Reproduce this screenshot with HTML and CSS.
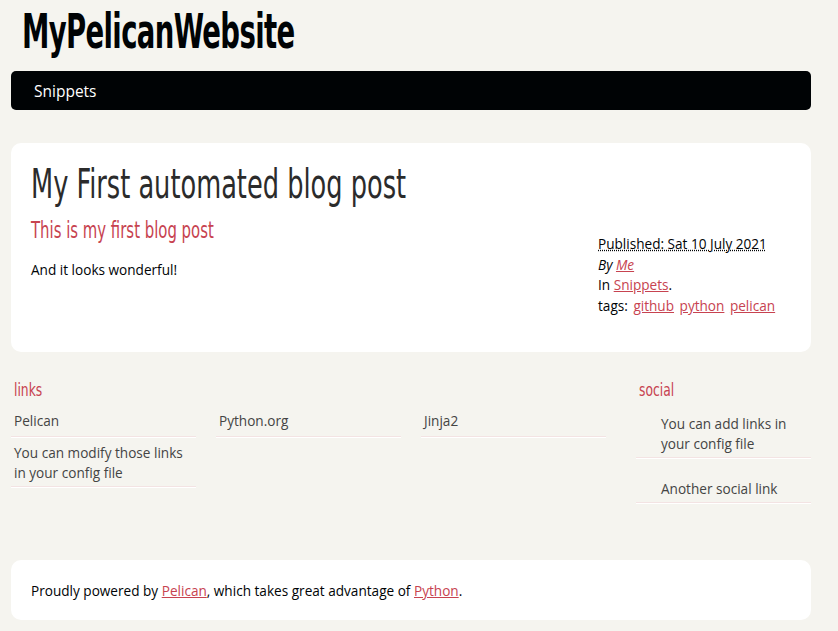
FILE: index.html
```html
<!DOCTYPE html>
<html lang="en">
<head>
<meta charset="utf-8">
<title>MyPelicanWebsite</title>
<link rel="stylesheet" href="styles.css">
</head>
<body>
<header class="banner">
  <h1 class="site-title"><a class="narrow title-narrow" href="#">MyPelicanWebsite</a></h1>
  <nav class="menu"><ul><li><a href="#">Snippets</a></li></ul></nav>
</header>

<section class="box content">
  <article class="post">
    <h1 class="entry-title"><span class="narrow entry-narrow">My First automated blog post</span></h1>
    <div class="post-body">
      <div class="entry-content">
        <h2 class="subtitle"><span class="narrow sub-narrow">This is my first blog post</span></h2>
        <p>And it looks wonderful!</p>
      </div>
      <footer class="post-info">
        <abbr class="published" title="2021-07-10">Published: Sat 10 July 2021</abbr>
        <address class="author">By <a href="#">Me</a></address>
        <div>In <a href="#">Snippets</a>.</div>
        <div class="tags">tags: <a href="#">github</a> <a href="#">python</a> <a href="#">pelican</a></div>
      </footer>
    </div>
  </article>
</section>

<section class="extras">
  <div class="blogroll">
    <h2 class="extras-title"><span class="narrow extras-narrow">links</span></h2>
    <ul class="blogroll-list">
      <li>Pelican</li>
      <li>Python.org</li>
      <li>Jinja2</li>
      <li>You can modify those links in your config file</li>
    </ul>
  </div>
  <div class="social">
    <h2 class="extras-title"><span class="narrow extras-narrow">social</span></h2>
    <ul class="social-list">
      <li>You can add links in your config file</li>
      <li>Another social link</li>
    </ul>
  </div>
</section>

<footer class="box site-footer">
  <address>Proudly powered by <a href="#">Pelican</a>, which takes great advantage of <a href="#">Python</a>.</address>
</footer>
</body>
</html>
```

FILE: styles.css
```css
* { box-sizing: border-box; }
html { background: #f5f4ef; }
body {
  margin: 0 0 0 11px;
  width: 800px;
  padding-bottom: 11px;
  font-family: "Open Sans", "DejaVu Sans", sans-serif;
  font-size: 13.6px;
  color: #000305;
  background: #f5f4ef;
}
a { color: #c74350; }
ul { list-style: none; margin: 0; padding: 0; }
address { font-style: normal; }

.narrow {
  display: inline-block;
  transform-origin: 0 50%;
  white-space: nowrap;
}

.banner { padding-top: 2px; }
.site-title {
  margin: 0 0 0 11px;
  font-family: "DejaVu Sans Condensed", "DejaVu Sans", sans-serif;
  font-stretch: condensed;
  font-size: 48px;
  line-height: 58px;
  font-weight: bold;
  letter-spacing: -1px;
}
.site-title a { color: #000305; text-decoration: none; }
.title-narrow { transform: scaleX(0.637); }

.menu {
  margin-top: 11px;
  height: 39px;
  background: #000305;
  border-radius: 5px;
  display: flex;
  align-items: center;
  padding-left: 23px;
}
.menu a {
  color: #fff;
  text-decoration: none;
  font-size: 15.5px;
  font-weight: 400;
}

.box {
  background: #fff;
  border-radius: 10px;
}
.content {
  margin-top: 33px;
  padding: 17px 20px 22px 20px;
  height: 209px;
}
.entry-title {
  margin: 0;
  font-family: "DejaVu Sans Condensed", "DejaVu Sans", sans-serif;
  font-stretch: condensed;
  font-weight: normal;
  font-size: 40px;
  line-height: 48px;
  color: #2b2b2b;
}
.entry-narrow { transform: scaleX(0.713); }
.post-body { display: flex; justify-content: space-between; }
.subtitle {
  margin: 8px 0 0;
  font-family: "DejaVu Sans Condensed", "DejaVu Sans", sans-serif;
  font-stretch: condensed;
  font-weight: normal;
  font-size: 23px;
  line-height: 28px;
  color: #c74350;
}
.sub-narrow { transform: scaleX(0.72); }
.entry-content p { margin: 16px 0 0; }
.post-info {
  width: 193px;
  margin-top: 26px;
  line-height: 20.7px;
  display: flex;
  flex-direction: column;
  align-items: flex-start;
}
.published { text-decoration: underline dotted; }
.author { font-style: italic; }
.tags a { margin-left: 2px; }

.extras {
  display: flex;
  justify-content: space-between;
  align-items: flex-start;
  margin-top: 26px;
}
.extras-title {
  margin: 0 0 0 3px;
  font-family: "DejaVu Sans Condensed", "DejaVu Sans", sans-serif;
  font-stretch: condensed;
  font-weight: normal;
  font-size: 18px;
  line-height: 24px;
  color: #c74350;
}
.extras-narrow { transform: scaleX(0.76); }
.blogroll { width: 600px; }
.blogroll-list {
  display: grid;
  grid-template-columns: repeat(3, 185px);
  column-gap: 20px;
  row-gap: 6px;
  margin-top: 9px;
}
.blogroll-list li, .social-list li {
  color: #444;
  line-height: 20px;
  padding: 0 3px 5px;
  border-bottom: 1px solid #f3e3e3;
  box-shadow: 0 1px 0 #fff;
}
.blogroll-list li:last-child { padding-bottom: 3px; }
.social { width: 175px; }
.social-list { margin-top: 12px; }
.social-list li { padding: 0 20px 3px 25px; margin-bottom: 21px; }
.social-list li:last-child { margin-bottom: 0; }

.site-footer {
  margin-top: 57px;
  height: 60px;
  display: flex;
  align-items: center;
  padding: 0 20px;
}
```
